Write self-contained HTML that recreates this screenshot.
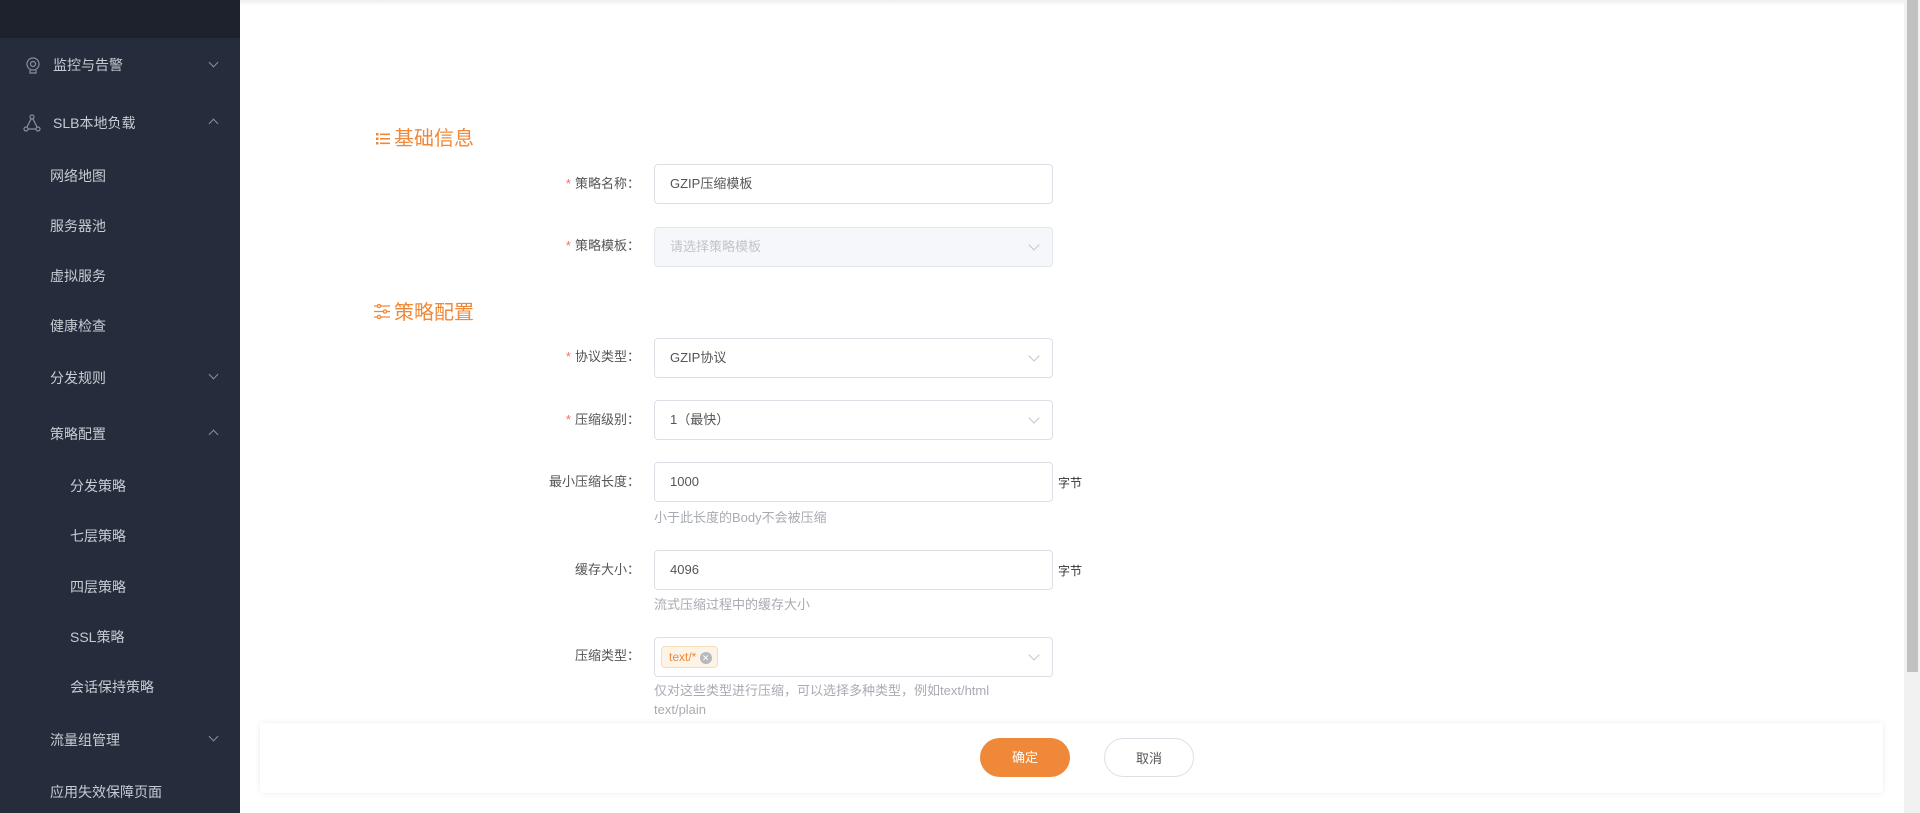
<!DOCTYPE html>
<html><head><meta charset="utf-8">
<style>
*{box-sizing:border-box;margin:0;padding:0}
body{width:1920px;height:813px;overflow:hidden;background:#fff;font-family:"Liberation Sans","Noto Sans CJK SC",sans-serif;position:relative}
.side{position:absolute;left:0;top:0;width:240px;height:813px;background:#252d3c}
.side .hd{height:38px;background:#1e222d}
.mi{position:absolute;color:#c7cbd2;font-size:14px;line-height:20px}
.chev{position:absolute;left:210px;width:7px;height:7px;border-right:1px solid #8a909b;border-bottom:1px solid #8a909b}
.down{transform:rotate(45deg)}
.up{transform:rotate(-135deg)}
.topsh{position:absolute;left:240px;top:0;right:16px;height:6px;background:linear-gradient(#eee,#fff)}
.h{position:absolute;left:375px;color:#f0883a;font-size:20px;line-height:24px}
.lab{position:absolute;right:1280px;font-size:13px;color:#555;line-height:20px;text-align:right;white-space:nowrap}
.lab b{color:#f56c6c;font-weight:normal;margin-right:4px}
.inp{position:absolute;left:654px;width:399px;height:40px;border:1px solid #dcdfe6;border-radius:4px;font-size:13px;color:#555;line-height:38px;padding-left:15px;background:#fff}
.inp.dis{background:#f5f7fa;color:#c0c4cc;border-color:#e4e7ed}
.inp .ar{position:absolute;right:14px;top:13px;width:8px;height:8px;border-right:1px solid #c0c4cc;border-bottom:1px solid #c0c4cc;transform:rotate(45deg)}
.help{position:absolute;left:654px;font-size:13px;color:#a8abb2;line-height:20px}
.unit{position:absolute;left:1058px;font-size:12px;color:#333}
.foot{position:absolute;left:260px;top:723px;width:1623px;height:70px;background:#fff;box-shadow:0 0 6px rgba(0,0,0,.08)}
.btn{position:absolute;top:15px;width:90px;height:39px;border-radius:20px;font-size:13px;text-align:center;line-height:39px}
.sb{position:absolute;right:0;top:0;width:16px;height:813px;background:#f1f1f1}
.sb div{position:absolute;left:3px;top:0;width:11px;height:672px;background:#c1c1c1}
</style></head><body>
<div class="side"><div class="hd"></div>
<svg style="position:absolute;left:25px;top:57px" width="16" height="18" viewBox="0 0 16 18" fill="none" stroke="#8a909b" stroke-width="1.2"><circle cx="8" cy="7" r="6"/><circle cx="8" cy="7" r="2.5"/><path d="M5 13v3h6v-3"/></svg>
<div class="mi" style="left:53px;top:55px">监控与告警</div><div class="chev down" style="top:59px"></div>
<svg style="position:absolute;left:23px;top:114px" width="18" height="18" viewBox="0 0 18 18" fill="none" stroke="#8a909b" stroke-width="1.2"><circle cx="9" cy="3" r="2"/><circle cx="3" cy="15" r="2"/><circle cx="15" cy="15" r="2"/><path d="M8 5L4 13M10 5l4 8M5 15h8"/></svg>
<div class="mi" style="left:53px;top:113px">SLB本地负载</div><div class="chev up" style="top:120px"></div>
<div class="mi" style="left:50px;top:166px">网络地图</div>
<div class="mi" style="left:50px;top:216px">服务器池</div>
<div class="mi" style="left:50px;top:266px">虚拟服务</div>
<div class="mi" style="left:50px;top:316px">健康检查</div>
<div class="mi" style="left:50px;top:368px">分发规则</div><div class="chev down" style="top:371px"></div>
<div class="mi" style="left:50px;top:424px">策略配置</div><div class="chev up" style="top:431px"></div>
<div class="mi" style="left:70px;top:476px">分发策略</div>
<div class="mi" style="left:70px;top:526px">七层策略</div>
<div class="mi" style="left:70px;top:577px">四层策略</div>
<div class="mi" style="left:70px;top:627px">SSL策略</div>
<div class="mi" style="left:70px;top:677px">会话保持策略</div>
<div class="mi" style="left:50px;top:730px">流量组管理</div><div class="chev down" style="top:733px"></div>
<div class="mi" style="left:50px;top:782px">应用失效保障页面</div>
</div>
<div class="topsh"></div>
<svg style="position:absolute;left:376px;top:132px" width="14" height="13" viewBox="0 0 14 13" fill="#f0883a"><rect x="0" y="1" width="2.5" height="2.5"/><rect x="0" y="5.5" width="2.5" height="2.5"/><rect x="0" y="10" width="2.5" height="2.5"/><rect x="4" y="1.5" width="10" height="1.6"/><rect x="4" y="6" width="10" height="1.6"/><rect x="4" y="10.5" width="10" height="1.6"/></svg>
<div class="h" style="left:394px;top:127px">基础信息</div>
<svg style="position:absolute;left:374px;top:304px" width="16" height="15" viewBox="0 0 16 15" fill="none" stroke="#f0883a" stroke-width="1.3"><path d="M0 2h16M0 7.5h16M0 13h16"/><circle cx="5" cy="2" r="1.6" fill="#fff"/><circle cx="11" cy="7.5" r="1.6" fill="#fff"/><circle cx="5" cy="13" r="1.6" fill="#fff"/></svg>
<div class="h" style="left:394px;top:301px">策略配置</div>

<div class="lab" style="top:174px"><b>*</b>策略名称：</div><div class="inp" style="top:164px">GZIP压缩模板</div>
<div class="lab" style="top:236px"><b>*</b>策略模板：</div><div class="inp dis" style="top:227px">请选择策略模板<span class="ar"></span></div>
<div class="lab" style="top:347px"><b>*</b>协议类型：</div><div class="inp" style="top:338px">GZIP协议<span class="ar"></span></div>
<div class="lab" style="top:410px"><b>*</b>压缩级别：</div><div class="inp" style="top:400px">1（最快）<span class="ar"></span></div>
<div class="lab" style="top:472px">最小压缩长度：</div><div class="inp" style="top:462px">1000</div><div class="unit" style="top:474px">字节</div>
<div class="help" style="top:508px">小于此长度的Body不会被压缩</div>
<div class="lab" style="top:560px">缓存大小：</div><div class="inp" style="top:550px">4096</div><div class="unit" style="top:562px">字节</div>
<div class="help" style="top:595px">流式压缩过程中的缓存大小</div>
<div class="lab" style="top:646px">压缩类型：</div><div class="inp" style="top:637px;padding-left:6px"><span style="display:inline-block;height:22px;line-height:20px;margin-top:8px;vertical-align:top;border:1px solid #f8dcb8;background:#fdf3e6;color:#f0883a;font-size:12px;border-radius:4px;padding:0 5px 0 7px">text/* <span style="display:inline-block;width:12px;height:12px;border-radius:50%;background:#b5b8bf;color:#fff;font-size:9px;line-height:12px;text-align:center;vertical-align:middle">✕</span></span><span class="ar"></span></div>
<div class="help" style="top:681px">仅对这些类型进行压缩，可以选择多种类型，例如text/html</div>
<div class="help" style="top:700px">text/plain</div>

<div class="foot">
<div class="btn" style="left:720px;background:#f0883a;color:#fff">确定</div>
<div class="btn" style="left:844px;border:1px solid #dcdfe6;color:#555">取消</div>
</div>
<div class="sb"><div></div></div>
</body></html>
